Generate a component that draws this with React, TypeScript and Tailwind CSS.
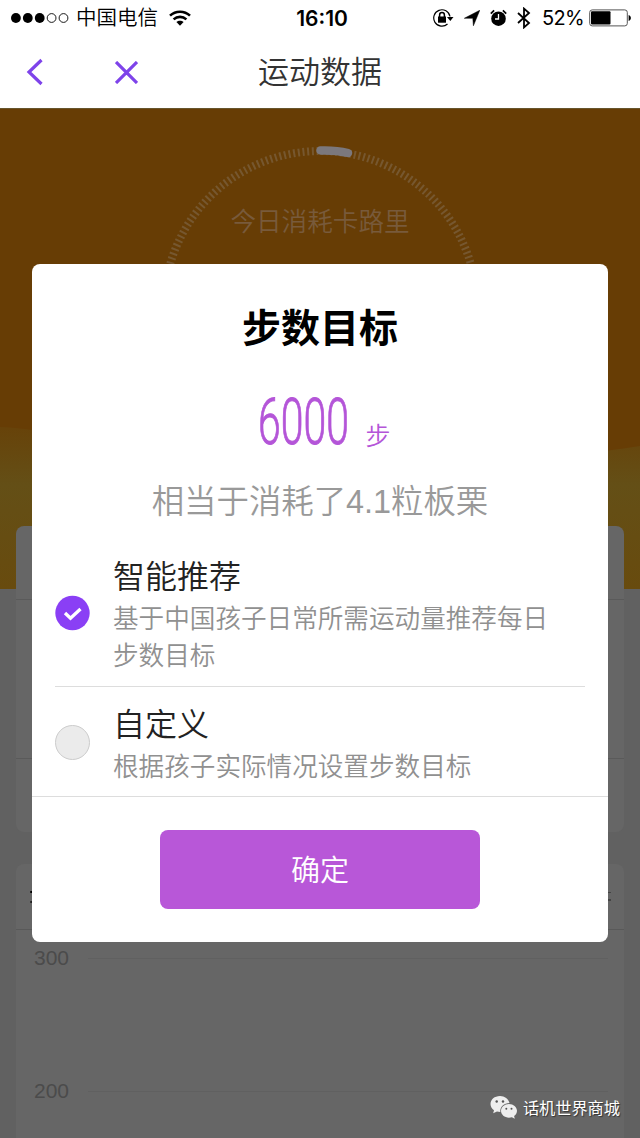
import React from 'react'

const purple = '#7e43ea'

function StatusBar() {
  return (
    <div className="grid h-9 grid-cols-[1fr_auto_1fr] items-center text-[20px] leading-none text-black">
      <div className="flex items-center pl-[11px]">
        <svg width="58" height="12" viewBox="0 0 58 12">
          {[0, 1, 2, 3, 4].map((i) => (
            <circle key={i} cx={4.9 + i * 11.9} cy="6" r={i < 3 ? 4.9 : 4.4} fill={i < 3 ? '#000' : '#fff'} stroke="#000" strokeWidth={i < 3 ? 0 : 0.9} />
          ))}
        </svg>
        <span className="ml-[7px] text-[20.5px] font-[350]">中国电信</span>
        <svg className="ml-[11px]" width="22" height="16" viewBox="0 0 22 16" fill="none" stroke="#000" strokeWidth="2.6">
          <path d="M1 5.6C6.6 .4 15.4 .4 21 5.6M4.6 9.4c3.7-3.3 9.1-3.3 12.8 0" />
          <path d="M7.4 12.1c2-1.8 5.2-1.8 7.2 0L11 15.8Z" fill="#000" stroke="none" />
        </svg>
      </div>
      <span className="pl-1 font-['Inter'] text-[21px] font-semibold">16:10</span>
      <div className="flex items-center justify-end pr-2">
        <svg width="21" height="18" viewBox="0 0 21 18" fill="none" stroke="#000" strokeWidth="1.2">
          <path d="M17 7.5A8.2 8.2 0 1 0 14.5 15" />
          <path d="M14 8h6.5l-3.2 4Z" fill="#000" stroke="none" />
          <rect x="5" y="7.5" width="8" height="6.2" fill="#000" stroke="none" />
          <path d="M6.6 8V6a2.4 2.4 0 0 1 4.8 0V8" strokeWidth="1.5" />
        </svg>
        <svg className="ml-[10px]" width="16" height="16" viewBox="0 0 16 16">
          <path d="M15.8 .2 9.4 15.8 8.8 8.3.3 8.3Z" stroke="#000" strokeWidth=".5" />
        </svg>
        <svg className="ml-[10px]" width="17" height="18" viewBox="0 0 17 18">
          <circle cx="8.5" cy="9.7" r="7.3" />
          <path d="M.8 4.6 4.1 1.3M16.2 4.6l-3.3-3.3" stroke="#000" strokeWidth="1.7" />
          <path d="M8.5 5v5H5" fill="none" stroke="#fff" strokeWidth="1.3" />
        </svg>
        <svg className="ml-[10px]" width="14" height="22" viewBox="0 0 14 22" fill="none" stroke="#000" strokeWidth="1.8">
          <path d="m1 6 11 10-5 4.4V1.6L12 6 1 16" />
        </svg>
        <span className="ml-[11px] font-['Inter'] text-[20px] tracking-[-.7px]">52%</span>
        <svg className="ml-[5px]" width="43" height="18" viewBox="0 0 43 18">
          <rect x=".7" y=".9" width="37.6" height="16" rx="2.5" fill="#fff" stroke="#555" />
          <rect x="2" y="2.2" width="19.5" height="13.4" rx="1" />
          <path d="M39.6 6c3 .8 3 5.2 0 6Z" />
        </svg>
      </div>
    </div>
  )
}

function NavBar() {
  return (
    <div className="grid h-[72px] grid-cols-[1fr_auto_1fr] items-center">
      <div className="flex items-center pl-[26px]">
        <svg width="17" height="28" viewBox="0 0 17 28" fill="none" stroke={purple} strokeWidth="3.2">
          <path d="M15.5 2 3 14l12.5 12" />
        </svg>
        <svg className="ml-[72px]" width="23" height="23" viewBox="0 0 23 23" fill="none" stroke={purple} strokeWidth="3.2">
          <path d="m1 1 21 21M22 1 1 22" />
        </svg>
      </div>
      <h1 className="text-[31px] leading-none font-[350] text-[#333]">运动数据</h1>
    </div>
  )
}

function Hero() {
  return (
    <div className="relative h-[480px] bg-[#673d05]">
      <svg className="absolute inset-0" width="640" height="480" viewBox="0 0 640 480" fill="none">
        <defs>
          <linearGradient id="hill" x1="0" y1="320" x2="0" y2="480" gradientUnits="userSpaceOnUse">
            <stop offset="0" stopColor="#67430a" />
            <stop offset=".35" stopColor="#644f16" />
            <stop offset="1" stopColor="#684b0e" />
          </linearGradient>
        </defs>
        <path d="M0 318C60 320 110 345 320 345S560 350 640 337V480H0Z" fill="url(#hill)" />
        <circle cx="320.5" cy="198.5" r="156.5" stroke="#76572f" strokeWidth="8" strokeDasharray="2 2.7" />
        <path d="M320.5 41.5Q336 41 348 44" stroke="#7b787d" strokeWidth="8.5" strokeLinecap="round" />
      </svg>
      <div className="relative pt-[99px] text-center text-[25.6px] leading-[28px] font-[350] text-[#785a3b]">今日消耗卡路里</div>
    </div>
  )
}

function Backdrop() {
  return (
    <div className="h-full bg-[#616161]">
      <Hero />
      <div className="relative mx-4 -mt-[63px] h-[306px] rounded-lg bg-[#666] pt-[73px]">
        <div className="h-[160px] border-y border-[#5a5a5a]" />
      </div>
      <div className="mx-4 mt-8 h-[300px] rounded-t-lg bg-[#666]">
        <div className="flex h-[66px] items-center justify-between border-b border-[#595959] px-[13px]">
          <div className="grid gap-[8px] pl-px">
            <i className="h-[2px] w-[4px] rounded-full bg-black" />
            <i className="h-[2px] w-[3px] rounded-full bg-[#222]" />
          </div>
          <div className="grid gap-[6px]">
            <i className="h-[1px] w-[4px] bg-[#444]" />
            <i className="h-[2px] w-[4px] bg-[#444]" />
          </div>
        </div>
        <ChartRow value={300} />
        <ChartRow value={200} />
      </div>
    </div>
  )
}

function ChartRow({ value }: { value: number }) {
  return (
    <div className="flex h-[133px] items-start pr-4 pl-[18px] pt-[16px]">
      <span className="w-[54px] font-['Liberation_Sans'] text-[21px] leading-[24px] text-[#4b4b4b]">{value}</span>
      <div className="mt-[12px] h-px flex-1 bg-[#606060]" />
    </div>
  )
}

function GoalDialog() {
  return (
    <div className="flex h-[678px] w-[576px] flex-col rounded-lg bg-white">
      <h2 className="pt-[43px] text-center text-[39px] leading-[44px] font-bold text-black">步数目标</h2>
      <div className="mt-[39px] flex h-[64px] items-end justify-center pl-[9px] text-[#b455d8]">
        <span className="w-[94px] origin-left scale-x-[.63] font-['Roboto'] text-[65px] leading-[64px] font-light [-webkit-text-stroke:.9px_#b455d8]">6000</span>
        <span className="ml-[13px] text-[25px] leading-[36px] font-[350]">步</span>
      </div>
      <p className="mt-[28px] text-center text-[32.4px] leading-[40px] font-[350] text-[#999]">相当于消耗了4.1粒板栗</p>
      <div className="mx-[23px] mt-[33px] flex h-[132px] border-b border-[#ddd]">
        <svg className="mt-[40px] mr-[23px] shrink-0" width="35" height="36" viewBox="0 0 35 36">
          <circle cx="17.5" cy="18" r="17.2" fill="#8a3ff5" />
          <path d="m10 18 5.5 5.3L25.5 14" fill="none" stroke="#fff" strokeWidth="3.3" />
        </svg>
        <div>
          <h3 className="text-[32px] leading-[44px] font-[350] text-[#222]">智能推荐</h3>
          <p className="w-[440px] pt-[2px] text-[25.6px] leading-[37px] font-[350] text-[#909090]">基于中国孩子日常所需运动量推荐每日步数目标</p>
        </div>
      </div>
      <div className="flex h-[110px] border-b border-[#ddd] px-[23px]">
        <div className="mt-[38px] mr-[23px] size-[35px] shrink-0 rounded-full border border-[#ccc] bg-[#ebebeb]" />
        <div className="pt-[16px]">
          <h3 className="text-[32px] leading-[44px] font-[350] text-[#222]">自定义</h3>
          <p className="pt-[2px] text-[25.6px] leading-[37px] font-[350] text-[#909090]">根据孩子实际情况设置步数目标</p>
        </div>
      </div>
      <button className="mx-auto mt-[33px] h-[79px] w-[320px] rounded-lg bg-[#b857d8] pt-[5px] text-[29px] font-[350] text-white">确定</button>
    </div>
  )
}

function Watermark() {
  return (
    <div className="absolute right-5 bottom-4 flex h-[28px] items-center gap-[5px]">
      <svg width="28" height="24" viewBox="0 0 28 24">
        <path d="M10 0C4.5 0 .5 3.6.5 8c0 2.5 1.3 4.7 3.5 6.2L3.2 17.3 7 15.6a12 12 0 0 0 3.3.4C10 10.5 14 7 19.5 7 18.5 3 14.7 0 10 0Z" fill="#eee" />
        <path d="M27 14.8C27 11 23.4 8 19 8s-8 3-8 6.8 3.6 6.9 8 6.9c1 0 2-.2 2.9-.5l2.9 1.6-.7-2.7c1.8-1.3 2.9-3.2 2.9-5.3Z" fill="#eee" />
        <g fill="#555">
          <circle cx="6.7" cy="5.5" r="1.2" />
          <circle cx="13" cy="5.5" r="1.2" />
          <circle cx="16.3" cy="12.7" r="1" />
          <circle cx="21.5" cy="12.7" r="1" />
        </g>
      </svg>
      <span className="pt-px text-[16.2px] leading-none text-white [text-shadow:1px_1px_1px_#333]">话机世界商城</span>
    </div>
  )
}

export default function App() {
  return (
    <div className="flex h-[1138px] w-[640px] flex-col overflow-hidden bg-white font-['Liberation_Sans','Noto_Sans_CJK_SC',sans-serif]">
      <header className="h-[108px] shrink-0">
        <StatusBar />
        <NavBar />
      </header>
      <main className="relative h-[1030px] overflow-hidden border-t border-[#67552d]">
        <Backdrop />
        <div className="absolute inset-0 flex items-start justify-center pt-[155px]">
          <GoalDialog />
        </div>
        <Watermark />
      </main>
    </div>
  )
}
